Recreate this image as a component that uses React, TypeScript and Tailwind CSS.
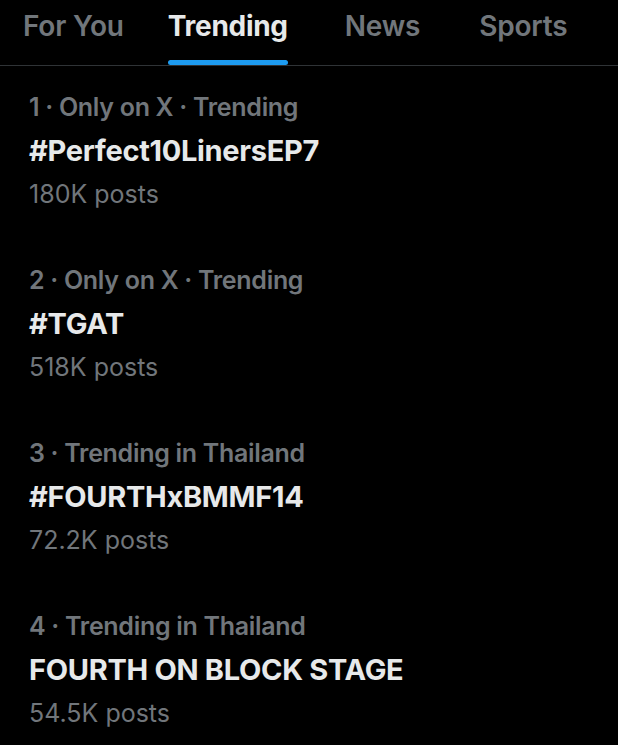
const tabs = [
  { label: 'For You', cls: 'ml-[23px]' },
  { label: 'Trending', cls: 'ml-[44px]' },
  { label: 'News', cls: 'ml-[57px]' },
  { label: 'Sports', cls: 'ml-[59px]' },
];

const trends = [
  { meta: '1 · Only on X · Trending', title: '#Perfect10LinersEP7', posts: '180K posts' },
  { meta: '2 · Only on X · Trending', title: '#TGAT', posts: '518K posts' },
  { meta: '3 · Trending in Thailand', title: '#FOURTHxBMMF14', posts: '72.2K posts' },
  { meta: '4 · Trending in Thailand', title: 'FOURTH ON BLOCK STAGE', posts: '54.5K posts' },
];

export default function App() {
  return (
    <div className="w-[618px] h-[745px] bg-black overflow-hidden font-['Inter',sans-serif]">
      <div className="flex h-[66px] border-b border-[#2f3336]">
        {tabs.map((t) => {
          const active = t.label === 'Trending';
          return (
            <div key={t.label} className={`relative flex items-start pt-[8px] ${t.cls}`}>
              <span
                className={
                  active
                    ? 'text-[28px] leading-[36px] font-bold text-[#e7e9ea] tracking-[-0.3px]'
                    : 'text-[28px] leading-[36px] font-semibold text-[#71767b] tracking-[-0.2px]'
                }
              >
                {t.label}
              </span>
              {active && (
                <div className="absolute left-0 right-0 bottom-0 h-[5px] rounded-full bg-[#1d9bf0]" />
              )}
            </div>
          );
        })}
      </div>

      <div className="flex flex-col">
        {trends.map((tr) => (
          <div key={tr.title} className="pl-[29px] pt-[25px] pb-[30px] flex flex-col">
            <div className="text-[25px] leading-[32px] font-semibold text-[#71767b] tracking-[-0.3px]">{tr.meta}</div>
            <div className="mt-[12px] text-[29px] leading-[32px] font-bold text-[#e7e9ea] tracking-[-0.3px]">{tr.title}</div>
            <div className="mt-[12px] text-[25px] leading-[30px] text-[#71767b]">{tr.posts}</div>
          </div>
        ))}
      </div>
    </div>
  );
}
